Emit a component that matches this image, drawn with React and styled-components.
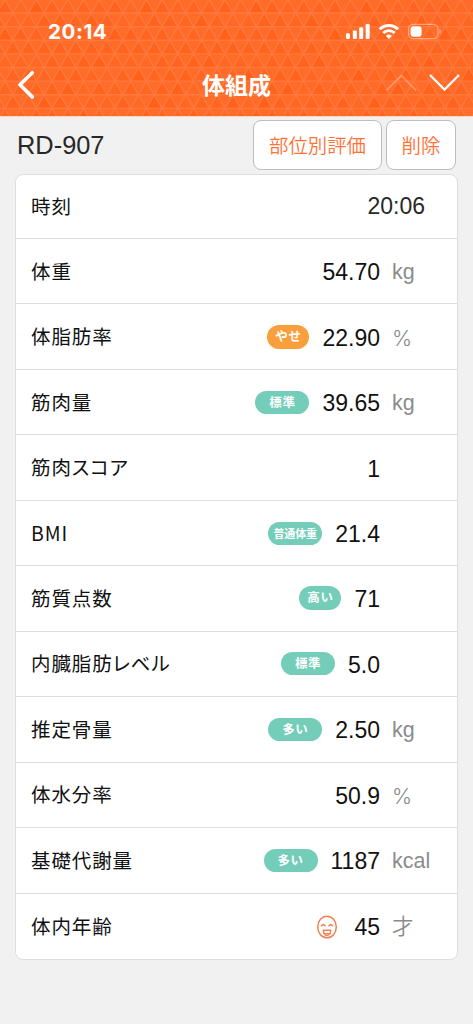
import React from "react";
import styled, { createGlobalStyle } from "styled-components";

const GlobalStyle = createGlobalStyle`
  * {
    box-sizing: border-box;
  }
  body {
    margin: 0;
    background-color: #f1f1f1;
    font-family: "Liberation Sans", "Noto Sans CJK JP", sans-serif;
  }
`;

const Screen = styled.div`
  height: 1024px;
  background-color: #f1f1f1;
  overflow: hidden;
`;
const Header = styled.header`
  position: relative;
  height: 117px;
  color: white;
  background-color: #ff6c29;
  border-bottom: 1px solid #ffd3bf;
`;
const Pattern = styled.svg`
  position: absolute;
  top: 0;
  left: 0;
`;
const StatusBar = styled.div`
  position: relative;
  display: flex;
  justify-content: space-between;
  align-items: center;
  height: 62px;
  padding: 0 31px 0 48px;
`;
const Clock = styled.span`
  font-family: Inter, sans-serif;
  font-size: 20.5px;
  font-weight: 700;
  letter-spacing: 0.6px;
`;
const NavBar = styled.div`
  position: relative;
  display: grid;
  grid-template-columns: 96px 1fr 96px;
  align-items: center;
  height: 46px;
`;
const Title = styled.h1`
  margin: 0 0 2px;
  font-family: "Noto Sans CJK JP", sans-serif;
  font-size: 23px;
  line-height: 44px;
  font-weight: 700;
  text-align: center;
`;
const Toolbar = styled.div`
  display: flex;
  align-items: center;
  gap: 4px;
  height: 57px;
  padding: 2px 17px 4px 17px;
`;
const Device = styled.span`
  flex: 1;
  margin-top: 2px;
  font-size: 25.4px;
  color: #282828;
`;
const Button = styled.button`
  width: ${props => props.$width}px;
  height: 50px;
  padding: 0;
  border: 1.5px solid #bdbdbd;
  border-radius: 8px;
  background-color: white;
  color: #ff7236;
  font-family: "Noto Sans CJK JP", sans-serif;
  font-size: 19.4px;
  line-height: 46px;
  font-weight: 350;
`;
const Card = styled.div`
  width: 443px;
  height: 786px;
  margin-left: 15px;
  display: grid;
  grid-template-rows: 64px repeat(11, 1fr);
  border: 1.5px solid #dedede;
  border-radius: 8px;
  background-color: white;
`;
const Row = styled.div`
  display: flex;
  align-items: center;
  padding-left: 15px;
  border-bottom: 1.5px solid #dedede;
  &:last-child {
    border-bottom: none;
  }
`;
const Label = styled.span`
  flex: 1;
  margin-bottom: 1px;
  font-family: "Noto Sans CJK JP", sans-serif;
  font-size: 19.5px;
  line-height: 30px;
  letter-spacing: 0.9px;
  font-feature-settings: "palt";
  color: #111;
`;
const Badge = styled.span`
  width: ${props => (props.$small ? 42 : 54)}px;
  height: ${props => (props.$small ? 24 : 23)}px;
  border-radius: 12px;
  background-color: ${props => (props.$orange ? "#f99f3c" : "#74cdb9")};
  color: white;
  font-family: "Noto Sans CJK JP", sans-serif;
  font-size: ${props => (props.$tight ? 11 : 12.5)}px;
  font-weight: 700;
  line-height: 22px;
  letter-spacing: ${props => (props.$tight ? -0.1 : 0.6)}px;
  text-align: center;
  white-space: nowrap;
`;
const Value = styled.span`
  margin-left: 13px;
  margin-top: 2px;
  font-size: 23px;
  line-height: 30px;
  color: #111;
`;
const Unit = styled.span`
  width: 65px;
  margin-left: 12px;
  margin-top: 2px;
  font-family: ${props => (props.$percent ? "Inter" : '"Liberation Sans", "Noto Sans CJK JP"')}, sans-serif;
  font-size: ${props => (props.$percent ? 21.5 : 21.5)}px;
  line-height: 30px;
  color: #8b8b8b;
  font-weight: ${props => (props.$percent ? 300 : 350)};
`;
const TimeValue = styled(Value)`
  margin-right: 32px;
  margin-top: 0;
  margin-bottom: 1px;
  color: #282828;
`;
const FaceIcon = styled.svg`
  margin-top: 2px;
  margin-right: 3px;
`;

const ROWS = [
  { label: "体重", value: "54.70", unit: "kg" },
  { label: "体脂肪率", value: "22.90", unit: "%", badge: "やせ", small: true, orange: true },
  { label: "筋肉量", value: "39.65", unit: "kg", badge: "標準" },
  { label: "筋肉スコア", value: "1" },
  { label: "BMI", value: "21.4", badge: "普通体重", tight: true },
  { label: "筋質点数", value: "71", badge: "高い", small: true },
  { label: "内臓脂肪レベル", value: "5.0", badge: "標準" },
  { label: "推定骨量", value: "2.50", unit: "kg", badge: "多い" },
  { label: "体水分率", value: "50.9", unit: "%" },
  { label: "基礎代謝量", value: "1187", unit: "kcal", badge: "多い" },
  { label: "体内年齢", value: "45", unit: "才", face: true }
];

const SIDE = 15.72;
const RISE = 13.62;

// 三角形の模様。偶数行と奇数行で半分ずらす
function Triangles() {
  const list = [];
  for (let r = 0; r < 9; r++) {
    const y = r * RISE - 0.6;
    const offset = r % 2 === 0 ? 4.9 : 12.76;
    for (let c = -1; c < 32; c++) {
      const x = c * SIDE + offset;
      const n = (r * 37 + c * 23 + r * c * 11 + 400) % 7;
      list.push(
        <path
          key={r + "-" + c}
          d={`M${x} ${y}L${x + SIDE / 2} ${y + RISE}H${x - SIDE / 2}Z`}
          fill={["#ff641f", "#ff631d", "#ff6722", "#ff6925", "#ff6520", "#ff611a", "#ff6622"][n]}
          stroke="#ff783c"
          strokeWidth="1.4"
        />
      );
    }
  }
  return (
    <Pattern width="473" height="116">
      {list}
    </Pattern>
  );
}

function StatusIcons() {
  return (
    <svg width="98" height="20" viewBox="344 21 98 20" fill="white">
      <rect x="346" y="33.3" width="4" height="5.7" rx="1.2" />
      <rect x="352.8" y="30.4" width="4" height="8.6" rx="1.2" />
      <rect x="359.2" y="27.2" width="4" height="11.8" rx="1.2" />
      <rect x="365.7" y="24" width="4" height="15" rx="1.2" />
      <g fill="none" stroke="white" strokeWidth="2.8">
        <path d="M379.7 29.3a13 13 0 0 1 18.4 0" />
        <path d="M383.2 33a8.2 8.2 0 0 1 11.4 0" />
      </g>
      <path d="M388.9 38.9l-3-3a4.3 4.3 0 0 1 6 0z" />
      <rect x="408.6" y="24.3" width="29.4" height="14.4" rx="4.6" fill="none" stroke="white" strokeOpacity="0.42" strokeWidth="1.2" />
      <rect x="410.6" y="26.2" width="11" height="10.6" rx="3" />
      <path d="M439.5 29.1c1.7.6 1.7 4.2 0 4.8z" fillOpacity="0.45" />
    </svg>
  );
}

function Face() {
  return (
    <FaceIcon width="22" height="24" viewBox="0 0 22 24" fill="none" stroke="#f08150" strokeWidth="1.5" strokeLinecap="round" strokeLinejoin="round">
      <ellipse cx="11" cy="12" rx="9.3" ry="10.8" />
      <path d="M5.5 10.8q1.8-1.9 3.5 0M13 10.8q1.8-1.9 3.5 0" />
      <path d="M7.4 15.2h7.3c0 6.6-7.3 6.6-7.3 0z" />
      <path d="M9.3 18.7q1.7-1 3.4 0" strokeWidth="1.1" />
    </FaceIcon>
  );
}

class App extends React.Component {
  renderRow(row) {
    return (
      <Row key={row.label}>
        <Label>{row.label}</Label>
        {row.badge && (
          <Badge $small={row.small} $orange={row.orange} $tight={row.tight}>
            {row.badge}
          </Badge>
        )}
        {row.face && <Face />}
        <Value>{row.value}</Value>
        <Unit $percent={row.unit === "%"}>{row.unit}</Unit>
      </Row>
    );
  }

  render() {
    return (
      <Screen>
        <GlobalStyle />
        <Header>
          <Triangles />
          <StatusBar>
            <Clock>20:14</Clock>
            <StatusIcons />
          </StatusBar>
          <NavBar>
            <svg width="96" height="46" viewBox="0 62 96 46" fill="none" stroke="white" strokeWidth="3.6" strokeLinecap="round" strokeLinejoin="round">
              <path d="M32.3 72.7L20 84.8l12.3 12.1" />
            </svg>
            <Title>体組成</Title>
            <svg width="96" height="46" viewBox="377 62 96 46" fill="none" stroke="white" strokeWidth="2.2">
              <path d="M386.5 90.4L401.3 75.6l14.8 14.8" strokeOpacity="0.28" strokeWidth="1.8" />
              <path d="M430 75l14.5 14.6L459 75" />
            </svg>
          </NavBar>
        </Header>
        <Toolbar>
          <Device>RD-907</Device>
          <Button $width={129}>部位別評価</Button>
          <Button $width={70}>削除</Button>
        </Toolbar>
        <Card>
          <Row>
            <Label>時刻</Label>
            <TimeValue>20:06</TimeValue>
          </Row>
          {ROWS.map(this.renderRow)}
        </Card>
      </Screen>
    );
  }
}

export default App;
